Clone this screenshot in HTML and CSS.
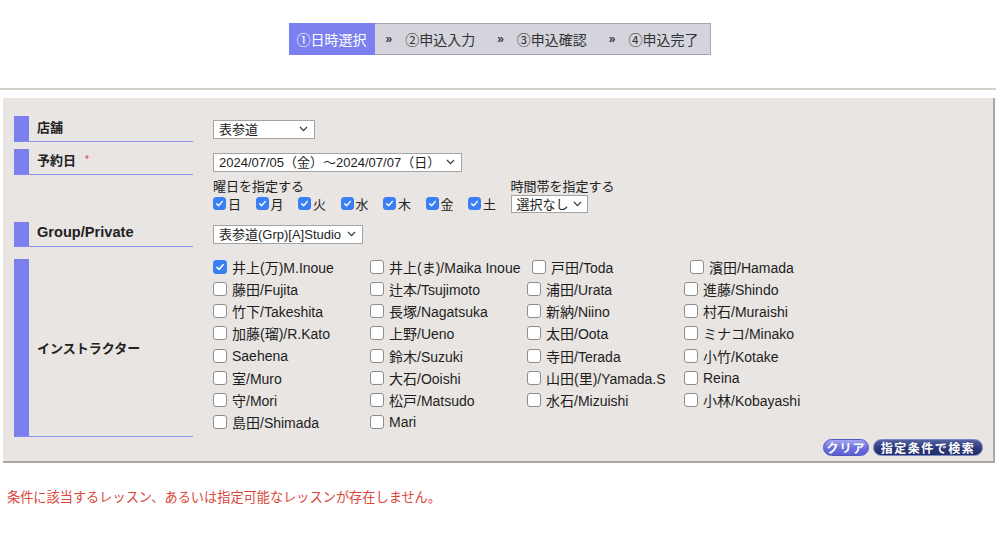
FILE: index.html
```html
<!DOCTYPE html>
<html lang="ja">
<head>
<meta charset="utf-8">
<title>日時選択</title>
<link rel="stylesheet" href="styles.css">
</head>
<body>
<nav class="steps">
  <span class="step active">①日時選択</span>
  <span class="sep">»</span>
  <span class="step">②申込入力</span>
  <span class="sep">»</span>
  <span class="step">③申込確認</span>
  <span class="sep">»</span>
  <span class="step last">④申込完了</span>
</nav>
<div class="rule"></div>
<form class="panel">
  <div class="row r-shop">
    <div class="label">店舗</div>
    <div class="value">
      <span class="select s-shop"><span>表参道</span><svg class="chev" viewBox="0 0 9 6"><polyline points="1,1 4.5,4.6 8,1"/></svg></span>
    </div>
  </div>
  <div class="row r-date">
    <div class="label">予約日<span class="req">*</span></div>
    <div class="value">
      <span class="select s-date"><span>2024/07/05（金）～2024/07/07（日）</span><svg class="chev" viewBox="0 0 9 6"><polyline points="1,1 4.5,4.6 8,1"/></svg></span>
    </div>
  </div>
  <div class="row r-days">
    <div class="blank"></div>
    <div class="value days">
      <div class="dayblock">
        <div class="sub">曜日を指定する</div>
        <div class="daylist">
          <span class="day"><span class="cb sm on"><svg viewBox="0 0 14 14"><path d="M3.4 7.3 L5.9 9.8 L10.6 4.3"/></svg></span>日</span>
          <span class="day"><span class="cb sm on"><svg viewBox="0 0 14 14"><path d="M3.4 7.3 L5.9 9.8 L10.6 4.3"/></svg></span>月</span>
          <span class="day"><span class="cb sm on"><svg viewBox="0 0 14 14"><path d="M3.4 7.3 L5.9 9.8 L10.6 4.3"/></svg></span>火</span>
          <span class="day"><span class="cb sm on"><svg viewBox="0 0 14 14"><path d="M3.4 7.3 L5.9 9.8 L10.6 4.3"/></svg></span>水</span>
          <span class="day"><span class="cb sm on"><svg viewBox="0 0 14 14"><path d="M3.4 7.3 L5.9 9.8 L10.6 4.3"/></svg></span>木</span>
          <span class="day"><span class="cb sm on"><svg viewBox="0 0 14 14"><path d="M3.4 7.3 L5.9 9.8 L10.6 4.3"/></svg></span>金</span>
          <span class="day"><span class="cb sm on"><svg viewBox="0 0 14 14"><path d="M3.4 7.3 L5.9 9.8 L10.6 4.3"/></svg></span>土</span>
        </div>
      </div>
      <div class="timeblock">
        <div class="sub">時間帯を指定する</div>
        <span class="select s-time"><span>選択なし</span><svg class="chev" viewBox="0 0 9 6"><polyline points="1,1 4.5,4.6 8,1"/></svg></span>
      </div>
    </div>
  </div>
  <div class="row r-group">
    <div class="label"><span class="lat">Group/Private</span></div>
    <div class="value">
      <span class="select s-group"><span>表参道(Grp)[A]Studio</span><svg class="chev" viewBox="0 0 9 6"><polyline points="1,1 4.5,4.6 8,1"/></svg></span>
    </div>
  </div>
  <div class="row r-inst">
    <div class="label tall">インストラクター</div>
    <div class="value">
      <div class="inst">
        <span class="it"><span class="cb on"><svg viewBox="0 0 14 14"><path d="M3.4 7.3 L5.9 9.8 L10.6 4.3"/></svg></span>井上(万)M.Inoue</span>
        <span class="it"><span class="cb"></span>井上(ま)/Maika Inoue</span>
        <span class="it n1"><span class="cb"></span>戸田/Toda</span>
        <span class="it n2"><span class="cb"></span>濱田/Hamada</span>
        <span class="it"><span class="cb"></span>藤田/Fujita</span>
        <span class="it"><span class="cb"></span>辻本/Tsujimoto</span>
        <span class="it"><span class="cb"></span>浦田/Urata</span>
        <span class="it"><span class="cb"></span>進藤/Shindo</span>
        <span class="it"><span class="cb"></span>竹下/Takeshita</span>
        <span class="it"><span class="cb"></span>長塚/Nagatsuka</span>
        <span class="it"><span class="cb"></span>新納/Niino</span>
        <span class="it"><span class="cb"></span>村石/Muraishi</span>
        <span class="it"><span class="cb"></span>加藤(瑠)/R.Kato</span>
        <span class="it"><span class="cb"></span>上野/Ueno</span>
        <span class="it"><span class="cb"></span>太田/Oota</span>
        <span class="it"><span class="cb"></span>ミナコ/Minako</span>
        <span class="it"><span class="cb"></span>Saehena</span>
        <span class="it"><span class="cb"></span>鈴木/Suzuki</span>
        <span class="it"><span class="cb"></span>寺田/Terada</span>
        <span class="it"><span class="cb"></span>小竹/Kotake</span>
        <span class="it"><span class="cb"></span>室/Muro</span>
        <span class="it"><span class="cb"></span>大石/Ooishi</span>
        <span class="it"><span class="cb"></span>山田(里)/Yamada.S</span>
        <span class="it"><span class="cb"></span>Reina</span>
        <span class="it"><span class="cb"></span>守/Mori</span>
        <span class="it"><span class="cb"></span>松戸/Matsudo</span>
        <span class="it"><span class="cb"></span>水石/Mizuishi</span>
        <span class="it"><span class="cb"></span>小林/Kobayashi</span>
        <span class="it"><span class="cb"></span>島田/Shimada</span>
        <span class="it"><span class="cb"></span>Mari</span>
      </div>
    </div>
  </div>
  <div class="actions">
    <span class="btn btn-clear">クリア</span>
    <span class="btn btn-search">指定条件で検索</span>
  </div>
</form>
<p class="error">条件に該当するレッスン、あるいは指定可能なレッスンが存在しません。</p>
</body>
</html>
```

FILE: styles.css
```css
* { box-sizing: border-box; }

html, body {
  margin: 0;
  padding: 0;
  background: #ffffff;
}

body {
  font-family: "Liberation Sans", "Noto Sans CJK JP", sans-serif;
  color: #222222;
  font-size: 13px;
}

/* ---------- steps ---------- */
.steps {
  display: flex;
  align-items: center;
  width: fit-content;
  height: 32px;
  margin: 23px auto 0;
  background: #d4d4dc;
  border: 1px solid #a6a6ae;
  font-size: 14px;
  color: #333333;
}

.step {
  padding-right: 12px;
  white-space: nowrap;
}

.step.last {
  padding-right: 11px;
}

.step.active {
  align-self: stretch;
  display: flex;
  align-items: center;
  margin: -1px 0 -1px -1px;
  padding: 0 9px 0 7px;
  background: #7b7ff0;
  color: #ffffff;
}

.sep {
  padding: 0 13px 0 10px;
  font-size: 12px;
  font-weight: bold;
  color: #3a3a3a;
}

/* ---------- divider ---------- */
.rule {
  height: 2px;
  margin: 33px 4px 0 0;
  background: #d6d2cb;
}

/* ---------- panel ---------- */
.panel {
  margin: 8px 5px 0 3px;
  padding: 18px 10px 5px 11px;
  background: #e8e5e2;
  border-right: 2px solid #a9a7a5;
  border-bottom: 2px solid #a9a7a5;
}

.row {
  display: grid;
  grid-template-columns: 179px 1fr;
  column-gap: 20px;
}

.r-date { margin-top: 7px; }
.r-days { margin-top: 3px; }
.r-group { margin-top: 9px; }
.r-inst { margin-top: 9px; }

.label {
  display: flex;
  align-items: center;
  height: 26px;
  padding-left: 8px;
  padding-bottom: 4px;
  border-left: 15px solid #7b7ff0;
  border-bottom: 1px solid #8f93ea;
  font-weight: bold;
  font-size: 13px;
  color: #222222;
}

.label .lat {
  font-size: 14.6px;
}

.r-group .label { height: 25px; }

.label.tall {
  height: 178px;
  margin-top: 3px;
  padding-bottom: 0;
}

.req {
  margin-left: 9px;
  color: #e0393b;
  font-size: 10px;
  font-weight: normal;
}

.value {
  display: flex;
  align-items: center;
}

/* ---------- selects ---------- */
.select {
  display: inline-flex;
  align-items: center;
  justify-content: space-between;
  gap: 6px;
  height: 19px;
  padding: 0 6px 2px 5px;
  background: #ffffff;
  border: 1px solid #a4a4a4;
  font-size: 13px;
  color: #1e1e1e;
  white-space: nowrap;
}

.s-shop { width: 102px; }
.s-date { min-width: 246px; }
.s-group { min-width: 146px; }
.s-time {
  height: 18px;
  gap: 4px;
  padding-right: 5px;
}

.chev {
  width: 9px;
  height: 6px;
  flex: none;
  margin-top: 1px;
}

.chev polyline {
  fill: none;
  stroke: #333333;
  stroke-width: 1.1;
}

/* ---------- days ---------- */
.days {
  align-items: flex-start;
}

.sub {
  height: 17px;
  line-height: 17px;
  font-size: 13px;
}

.daylist {
  display: flex;
  height: 17px;
  align-items: center;
}

.day {
  display: inline-flex;
  align-items: center;
  gap: 2px;
  width: 42.5px;
  font-size: 13px;
}

/* ---------- checkboxes ---------- */
.cb {
  display: inline-flex;
  flex: none;
  width: 14px;
  height: 14px;
  background: #ffffff;
  border: 1px solid #8d8d8d;
  border-radius: 3px;
}

.cb.sm {
  width: 13px;
  height: 13px;
}

.cb.on {
  background: #3a7ff5;
  border-color: #3a7ff5;
}

.cb svg {
  width: 100%;
  height: 100%;
}

.cb svg path {
  fill: none;
  stroke: #ffffff;
  stroke-width: 1.8;
  stroke-linecap: round;
  stroke-linejoin: round;
}

/* ---------- instructors ---------- */
.r-inst .value {
  align-items: flex-start;
}

.inst {
  display: grid;
  grid-template-columns: repeat(4, 157px);
  grid-auto-rows: 22.25px;
}

.it {
  display: flex;
  align-items: center;
  gap: 5px;
  padding-bottom: 1px;
  font-size: 14px;
  color: #1e1e1e;
  white-space: nowrap;
}

.it.n1 { margin-left: 5px; }
.it.n2 { margin-left: 6px; }

/* ---------- actions ---------- */
.actions {
  display: flex;
  justify-content: flex-end;
  gap: 4px;
  margin-top: 2px;
}

.btn {
  display: inline-flex;
  align-items: center;
  justify-content: center;
  height: 17px;
  border-radius: 9px;
  color: #ffffff;
  font-weight: bold;
  font-size: 12px;
  letter-spacing: 1px;
  white-space: nowrap;
}

.btn-clear {
  width: 46px;
  background: linear-gradient(#a3a6f4, #6a6fdc 55%, #5c61d2);
  border: 1px solid #5257c0;
}

.btn-search {
  width: 110px;
  letter-spacing: 1.5px;
  background: linear-gradient(#55629f, #2c3877 55%, #222d6a);
  border: 1px solid #7b86c6;
}

/* ---------- error ---------- */
.error {
  margin: 24px 0 0 7px;
  font-size: 13.2px;
  color: #d9463c;
}
```
